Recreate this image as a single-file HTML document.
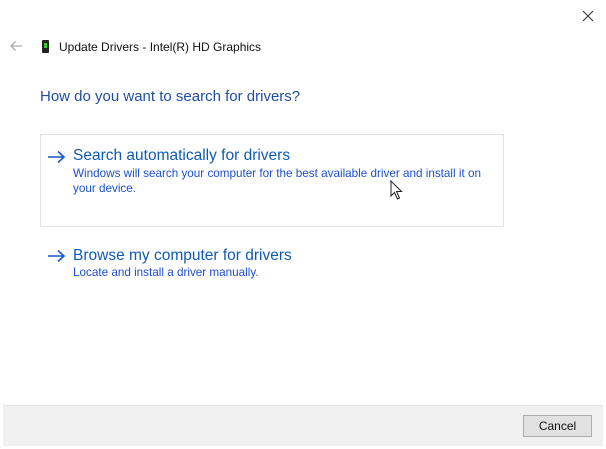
<!DOCTYPE html>
<html><head><style>
body{margin:0;width:606px;height:449px;background:#fff;position:relative;overflow:hidden;font-family:"Liberation Sans",sans-serif}
.a{position:absolute;white-space:nowrap}
.t{font-size:15.5px;color:#0f5bb5}
.d{color:#1c4fd0;font-size:11.7px;line-height:15px}
</style></head><body>
<svg class="a" style="left:582px;top:10px" width="12" height="12"><path d="M1 1L11 11M11 1L1 11" stroke="#333" stroke-width="1.1"/></svg>
<svg class="a" style="left:9px;top:40px" width="14" height="12"><path d="M13 6H2M6.5 1.5L2 6l4.5 4.5" stroke="#aaa" stroke-width="1.3" fill="none"/></svg>
<div class="a" style="left:42px;top:40px;width:7px;height:13px;background:#222;border-radius:1px"><div style="position:absolute;left:2px;top:3px;width:3px;height:5px;background:#3c3"></div></div>
<div class="a" style="left:59px;top:40px;font-size:12px;color:#111">Update Drivers - Intel(R) HD Graphics</div>
<div class="a" style="left:40px;top:88px;font-size:15px;color:#1f4ea6">How do you want to search for drivers?</div>
<div class="a" style="left:40px;top:134px;width:462px;height:91px;border:1px solid #e2e2e2"></div>
<svg class="a" style="left:47px;top:150px" width="19" height="14"><path d="M1 7H17M11 1.5L17 7l-6 5.5" stroke="#1a57c8" stroke-width="1.6" fill="none"/></svg>
<div class="a t" style="left:73px;top:147px">Search automatically for drivers</div>
<div class="a d" style="left:73px;top:166px">Windows will search your computer for the best available driver and install it on<br>your device.</div>
<svg class="a" style="left:390px;top:180px" width="14" height="20"><path d="M1 1V16L4.5 12.5L7.5 19L9.5 18L6.5 11.5H11.5Z" fill="#fff" stroke="#222" stroke-width="1"/></svg>
<svg class="a" style="left:47px;top:249px" width="19" height="14"><path d="M1 7H17M11 1.5L17 7l-6 5.5" stroke="#1a57c8" stroke-width="1.6" fill="none"/></svg>
<div class="a t" style="left:73px;top:247px">Browse my computer for drivers</div>
<div class="a d" style="left:73px;top:265px">Locate and install a driver manually.</div>
<div class="a" style="left:3px;top:405px;width:600px;height:40px;background:#f0f0f0;border-top:1px solid #e6e6e6"></div>
<div class="a" style="left:523px;top:415px;width:67px;height:20px;border:1px solid #adadad;background:#e1e1e1;font-size:12px;text-align:center;line-height:20px;color:#111">Cancel</div>
</body></html>
